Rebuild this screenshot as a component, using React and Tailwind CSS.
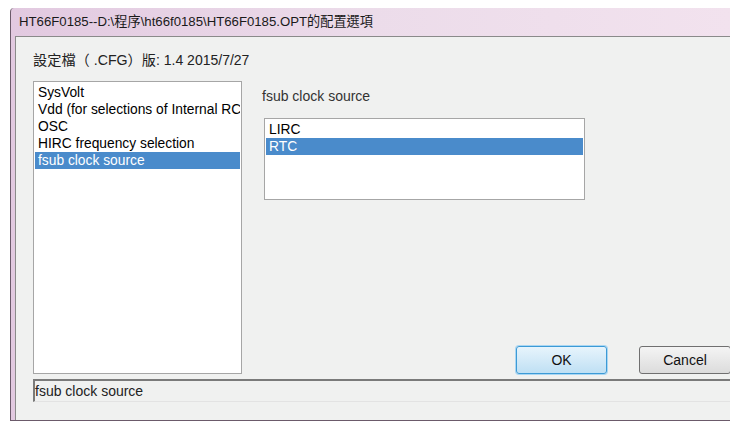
const options = [
  'SysVolt',
  'Vdd (for selections of Internal RC',
  'OSC',
  'HIRC frequency selection',
  'fsub clock source',
];

const choices = ['LIRC', 'RTC'];

const font = { fontFamily: '"Liberation Sans", "Noto Sans CJK TC", sans-serif' };

function ListBox({ items, selected, className }) {
  return (
    <div className={`shrink-0 border border-[#a6a6a6] bg-white p-[1px] ${className}`}>
      {items.map((item) => (
        <div
          key={item}
          className={`h-[17px] px-[3px] text-[13.8px] leading-[17px] whitespace-nowrap overflow-hidden ${
            item === selected ? 'bg-[#4a8bcb] text-white' : 'text-black'
          }`}
        >
          {item}
        </div>
      ))}
    </div>
  );
}

export default function App() {
  return (
    <div className="w-[730px] h-[421px] bg-white pt-[8px] pl-[10px] overflow-hidden" style={font}>
      <div className="h-[413px] flex flex-col border-l border-b border-[#6b5a6a] bg-gradient-to-r from-[#e2c9e0] via-[#ecdcea] to-[#f2e2ee] rounded-tl-[4px]">
        {/* title bar */}
        <div className="h-[28px] shrink-0 flex items-center pl-[8px] text-[13.2px] text-[#1a1a1a]">
          HT66F0185--D:\程序\ht66f0185\HT66F0185.OPT的配置選項
        </div>
        <div className="h-[384px] shrink-0 flex flex-col ml-[4px] border-t border-l border-[#8a8a8a] bg-[#f0f1f0]">
          <div className="h-[44px] shrink-0 flex items-center pl-[17px] pt-[3px]">
            <span className="text-[14.2px] text-[#222]">設定檔（ .CFG）版</span>
            <span className="text-[14px] text-[#222]">: 1.4 2015/7/27</span>
          </div>
          <div className="h-[293px] shrink-0 flex pl-[17px]">
            <ListBox items={options} selected="fsub clock source" className="w-[209px] h-[293px] pt-[2px]" />
            <div className="flex-1 flex flex-col pl-[20px]">
              <div className="h-[37px] shrink-0 pt-[5px] text-[14px] text-[#333]">fsub clock source</div>
              <ListBox items={choices} selected="RTC" className="ml-[2px] w-[321px] h-[82px] pt-[2px]" />
              <div className="flex-1" />
              <div className="flex gap-[32px] pl-[254px]">
                <button className="w-[91px] h-[28px] rounded-[3px] border border-[#3c9ad6] bg-gradient-to-b from-[#e7f4fc] to-[#bfe0f4] text-[14px] text-[#111] shadow-[0_0_0_1px_#a9d6f2]">
                  OK
                </button>
                <button className="w-[92px] h-[28px] rounded-[3px] border border-[#707070] bg-gradient-to-b from-[#f4f4f4] to-[#dcdcdc] text-[14px] text-[#111]">
                  Cancel
                </button>
              </div>
            </div>
          </div>
          {/* status line */}
          <div className="ml-[17px] mt-[5px] h-[23px] shrink-0 border-t-2 border-l-2 border-[#7a7a7a] border-b border-b-[#e3e3e3] flex items-center text-[14px] text-[#222]">
            fsub clock source
          </div>
        </div>
      </div>
    </div>
  );
}
